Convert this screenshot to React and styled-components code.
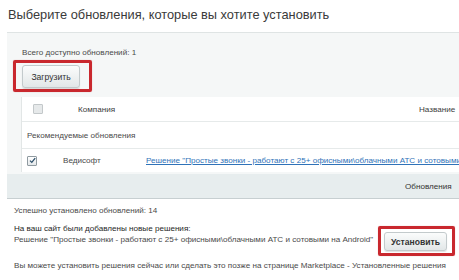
import React from 'react'
import styled, { createGlobalStyle } from 'styled-components'

// global page reset
const GlobalStyle = createGlobalStyle`
    html, body {
        margin: 0;
        padding: 0;
        background: #ffffff;
        overflow: hidden;
    }
    body {
        font-family: "Liberation Sans", Arial, sans-serif;
        color: #4a4a4a;
    }
`

// styled components
const Page = styled.div`
    width: 459px;
    height: 280px;
    overflow: hidden;
`

const Title = styled.h1`
    margin: 0;
    height: 32px;
    padding-left: 8px;
    font-size: 12.8px;
    font-weight: normal;
    line-height: 30px;
    color: #3a3a3a;
    white-space: nowrap;
`

const Panel = styled.div`
    margin-left: 7px;
    background: #f5f7f7;
    border-top: 1px solid #dfe4e4;
    padding: 14px 0 2px 14px;
`

const Small = styled.div`
    font-size: 8.1px;
    line-height: 12px;
    padding-left: ${(p) => p.indent || 0}px;
    color: ${(p) => p.dark ? '#262626' : '#4a4a4a'};
    white-space: nowrap;
`

const Highlight = styled.div`
    display: inline-flex;
    border: 3px solid #c9282e;
    border-radius: 2px;
    padding: ${(p) => p.pad};
    margin-left: ${(p) => p.shift || 0}px;
    margin-top: ${(p) => p.top || 0}px;
    box-shadow: 0 0 1px rgba(150, 20, 20, 0.4);
`

const Button = styled.button`
    width: ${(p) => p.w}px;
    height: ${(p) => p.h}px;
    padding: 0;
    border: 1px solid #c3cacc;
    border-radius: 3px;
    background: linear-gradient(#fbfcfc, #e2e7e8);
    box-shadow: 0 1px 1px rgba(0, 0, 0, 0.12);
    font-family: "Liberation Sans", Arial, sans-serif;
    font-size: 8.6px;
    font-weight: ${(p) => p.bold ? 'bold' : 'normal'};
    color: #333;
`

const Table = styled.div`
    margin-top: 5px;
    background: #ffffff;
    border-left: 1px solid #e2e6e6;
`

const Row = styled.div`
    display: flex;
    align-items: center;
    height: ${(p) => p.h}px;
    border-bottom: ${(p) => p.last ? 'none' : '1px solid #e6eaea'};
    font-size: 8.1px;
    white-space: nowrap;
`

const Cell = styled.div`
    box-sizing: border-box;
    flex: none;
    width: ${(p) => p.w ? p.w + 'px' : 'auto'};
    padding-left: ${(p) => p.pl || 0}px;
    color: ${(p) => p.head ? '#3c3c3c' : '#4a4a4a'};
`

const Box = styled.span`
    box-sizing: border-box;
    display: flex;
    align-items: center;
    justify-content: center;
    width: 10px;
    height: 10px;
    border: 1px solid ${(p) => p.disabled ? '#c3c8ca' : '#8f9aa0'};
    border-radius: 1px;
    background: ${(p) => p.disabled ? '#e6e9ea' : 'linear-gradient(#ffffff, #e4e8ea)'};
`

const Link = styled.a`
    color: #2f72b8;
    text-decoration: underline;
`

const Band = styled.div`
    margin-left: 7px;
    height: 24px;
    background: #e7edee;
    border-bottom: 1px solid #c7cfd1;
    display: flex;
    align-items: center;
    padding-left: 398px;
    font-size: 8.1px;
    color: #333;
    white-space: nowrap;
`

const Result = styled.div`
    padding: 6px 4px 0 14px;
`

const Notice = styled.div`
    display: flex;
    justify-content: space-between;
    align-items: flex-start;
    margin-top: 6px;
`

const Lines = styled.div`
    display: flex;
    flex-direction: column;
    & > div {
        line-height: 11px;
    }
`

const Footer = styled(Small)`
    margin-top: 4px;
`

const Check = ({ checked, disabled }) => (
    <Box disabled={disabled}>
        {checked && (
            <svg width="7" height="7" viewBox="0 0 7 7">
                <path d="M1 3.6 L2.8 5.4 L6.2 1.2" fill="none" stroke="#2c4f6a" strokeWidth="1.3" />
            </svg>
        )}
    </Box>
)

const solution = 'Решение "Простые звонки - работают с 25+ офисными\\облачными АТС и сотовыми на Android"'

// page driver code
const App = () => {
    return (
        <Page>
            <GlobalStyle />
            <Title>Выберите обновления, которые вы хотите установить</Title>

            <Panel>
                <Small indent={1}>Всего доступно обновлений: 1</Small>
                <Highlight pad="2px 9px 1px 6px" shift={-8} top={1}>
                    <Button w={58} h={23}>Загрузить</Button>
                </Highlight>

                <Table>
                    <Row h={24}>
                        <Cell w={56} pl={11}><Check disabled /></Cell>
                        <Cell w={341} head>Компания</Cell>
                        <Cell head>Название</Cell>
                    </Row>
                    <Row h={26}>
                        <Cell pl={5}>Рекомендуемые обновления</Cell>
                    </Row>
                    <Row h={23} last>
                        <Cell w={41} pl={5}><Check checked /></Cell>
                        <Cell w={83}>Ведисофт</Cell>
                        <Cell><Link href="#">{solution}</Link></Cell>
                    </Row>
                </Table>
            </Panel>

            <Band>Обновления</Band>

            <Result>
                <Small>Успешно установлено обновлений: 14</Small>
                <Notice>
                    <Lines>
                        <Small dark>На ваш сайт были добавлены новые решения:</Small>
                        <Small>{solution}</Small>
                    </Lines>
                    <Highlight pad="3px 5px 2px 3px" top={3}>
                        <Button w={63} h={19} bold>Установить</Button>
                    </Highlight>
                </Notice>
                <Footer>Вы можете установить решения сейчас или сделать это позже на странице Marketplace - Установленные решения</Footer>
            </Result>
        </Page>
    )
}

export default App
